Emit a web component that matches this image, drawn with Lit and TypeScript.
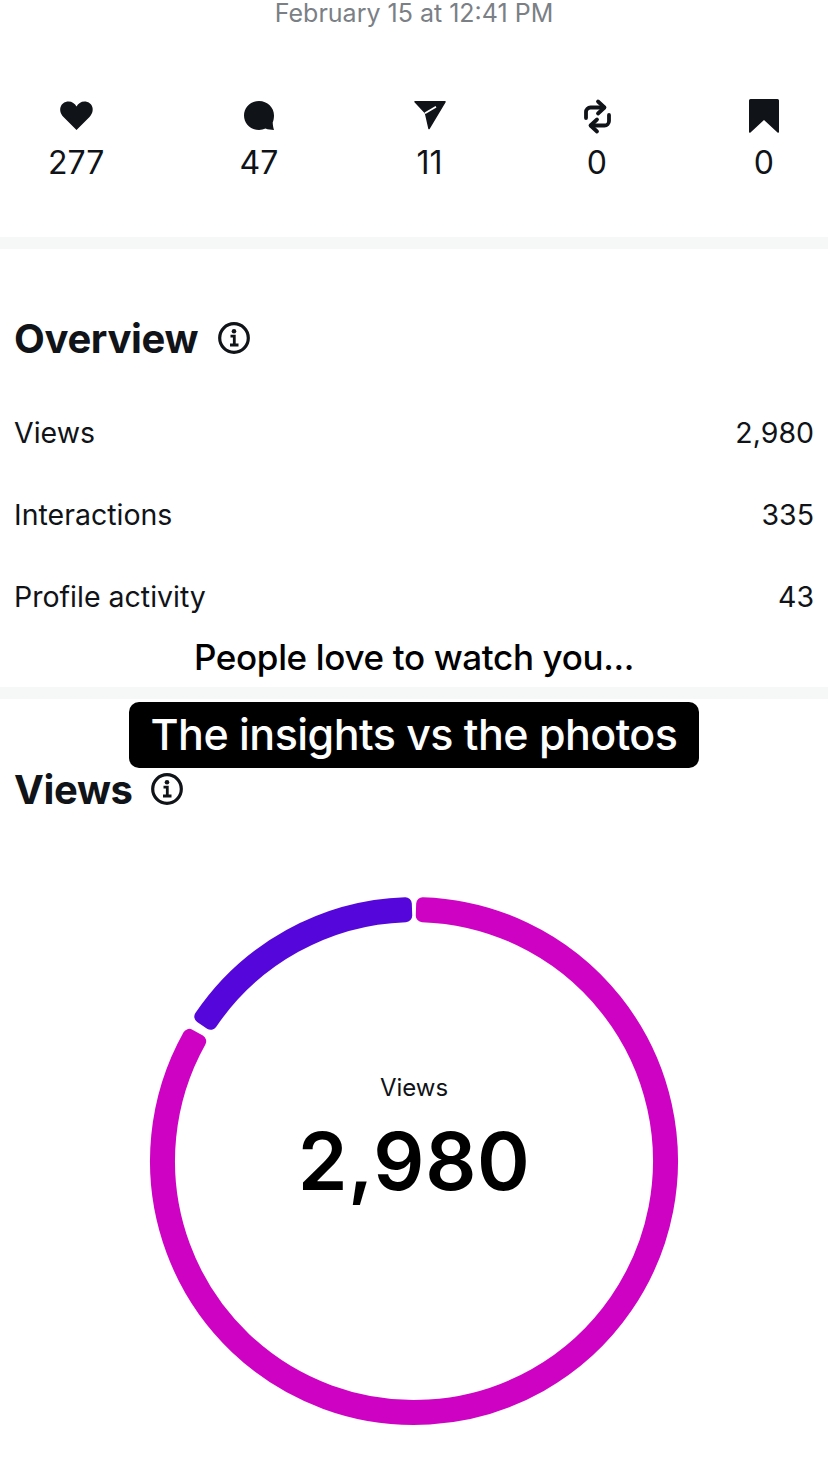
import { LitElement, html, css, svg } from 'lit';
import { customElement } from 'lit/decorators.js';

const CX = 264;
const CY = 264;

// Ring segment as a filled sector; the round-joined stroke gives the soft corners.
function sector(from: number, to: number, inner: number, outer: number) {
  const pt = (r: number, deg: number) => {
    const a = (deg * Math.PI) / 180;
    return `${(CX + r * Math.sin(a)).toFixed(2)} ${(CY - r * Math.cos(a)).toFixed(2)}`;
  };
  const large = to - from > 180 ? 1 : 0;
  return `M${pt(outer, from)} A${outer} ${outer} 0 ${large} 1 ${pt(outer, to)} L${pt(inner, to)} A${inner} ${inner} 0 ${large} 0 ${pt(inner, from)} Z`;
}

const STATS = [
  {
    value: '277',
    icon: svg`<path fill="currentColor" d="M16.5 32 L3.5 19 C-3 12 1 3.500 8.500 3.500 C12 3.500 15 5.500 16.5 8.500 C18 5.500 21 3.500 24.500 3.500 C32 3.500 36 12 29.500 19 Z" />`,
  },
  {
    value: '47',
    icon: svg`<path fill="currentColor" d="M16 3 C7.500 3 1 9.500 1 17.500 C1 25.500 7.500 32 16 32 C18.500 32 20.500 31.500 22.500 30.600 C25 31.600 28 32 31 32 C30.200 29.800 29.900 27.500 29.700 24.500 C30.500 22.500 31 20 31 17.500 C31 9.500 24.500 3 16 3 Z" />`,
  },
  {
    value: '11',
    icon: svg`<path fill="currentColor" stroke="currentColor" stroke-width="1.500" stroke-linejoin="round" d="M1 3.800 H31 L15 30.500 L11.500 15 Z" /><path fill="none" stroke="#fff" stroke-width="1.800" d="M11 15.200 L22 8.800" />`,
  },
  {
    value: '0',
    icon: svg`<g fill="none" stroke="currentColor" stroke-width="3.800" stroke-linecap="round" stroke-linejoin="round"><path d="M5 20 V14 A4.500 4.500 0 0 1 9.500 9.500 H23" /><path d="M17 3.500 L23.500 9.500 L17 15.500" /><path d="M28 17 V23 A4.500 4.500 0 0 1 23.500 27.500 H10" /><path d="M16 21.500 L9.500 27.500 L16 33.500" /></g>`,
  },
  {
    value: '0',
    icon: svg`<path fill="currentColor" d="M1 2.500 Q1 1 2.500 1 H29.500 Q31 1 31 2.500 V33.500 Q31 35.500 29.500 34.500 L16 22 L2.500 34.500 Q1 35.500 1 33.500 Z" />`,
  },
];

const ROWS = [
  { label: 'Views', value: '2,980' },
  { label: 'Interactions', value: '335' },
  { label: 'Profile activity', value: '43' },
];

const infoIcon = html`<svg class="info" viewBox="0 0 32 32" aria-hidden="true">
  <circle cx="16" cy="16" r="14.300" fill="none" stroke="currentColor" stroke-width="3.200" />
  <circle cx="16" cy="9.300" r="2.300" fill="currentColor" />
  <path fill="none" stroke="currentColor" stroke-width="2.800" d="M12.500 14.200 H16.300 V23 M12 23 H20.500" />
</svg>`;

@customElement('app-root')
export class AppRoot extends LitElement {
  static styles = css`
    :host {
      display: block;
      position: relative;
      height: 1472px;
      overflow: hidden;
      background: #fff;
      color: #101317;
      font-family: Inter, 'Noto Sans', sans-serif;
    }

    .date {
      line-height: 26px;
      font-size: 25px;
      text-align: center;
      color: #7b7f86;
    }

    .stats {
      display: flex;
      justify-content: space-between;
      padding: 72px 48px 54px;
    }

    .stat {
      display: flex;
      flex-direction: column;
      align-items: center;
    }

    .stat svg {
      display: block;
      width: 32px;
      height: 36px;
      overflow: visible;
    }

    .stat span {
      margin-top: 9px;
      font-size: 32px;
      line-height: 40px;
    }

    .divider {
      height: 12px;
      background: #f6f8f8;
    }

    .heading {
      display: flex;
      align-items: center;
      height: 48px;
      padding-left: 14px;
      font-size: 40px;
      font-weight: 700;
      letter-spacing: -0.35px;
    }

    .info {
      display: block;
      width: 32px;
      height: 32px;
    }

    .overview .heading {
      gap: 20px;
      margin-top: 65px;
    }

    .rows {
      margin: 29px 0 50px;
    }

    .row {
      display: flex;
      justify-content: space-between;
      align-items: center;
      height: 82px;
      padding: 0 14px;
      font-size: 28.5px;
    }

    .views .heading {
      gap: 18px;
      margin-top: 66px;
    }

    .chart {
      position: relative;
      width: 528px;
      height: 528px;
      margin: 84px auto 0;
    }

    .chart svg {
      display: block;
      width: 528px;
      height: 528px;
      overflow: visible;
    }

    .center {
      position: absolute;
      inset: 0;
      display: flex;
      flex-direction: column;
      align-items: center;
      padding-top: 176px;
      color: #000;
    }

    .center small {
      font-size: 24px;
      line-height: 30px;
      color: #101317;
    }

    .center strong {
      margin-top: 13px;
      font-size: 80px;
      line-height: 90px;
      font-weight: 600;
      letter-spacing: 0.6px;
    }

    .caption {
      position: absolute;
      top: 635px;
      left: 0;
      right: 0;
      text-align: center;
      font-size: 35px;
      line-height: 44px;
      font-weight: 550;
      letter-spacing: -0.35px;
      color: #000;
    }

    .pill {
      position: absolute;
      top: 702px;
      left: 129px;
      width: 570px;
      height: 64px;
      padding-bottom: 2px;
      display: flex;
      align-items: center;
      justify-content: center;
      border-radius: 10px;
      background: #000;
      color: #fff;
      font-size: 43px;
      font-weight: 550;
      letter-spacing: -0.55px;
    }
  `;

  render() {
    return html`
      <div class="date">February 15 at 12:41 PM</div>

      <div class="stats">
        ${STATS.map(
          (s) => html`<div class="stat">
            <svg viewBox="0 0 32 36" aria-hidden="true">${s.icon}</svg>
            <span>${s.value}</span>
          </div>`
        )}
      </div>

      <div class="divider"></div>

      <section class="overview">
        <div class="heading">Overview ${infoIcon}</div>
        <div class="rows">
          ${ROWS.map(
            (r) => html`<div class="row"><span>${r.label}</span><span>${r.value}</span></div>`
          )}
        </div>
      </section>

      <div class="divider"></div>

      <section class="views">
        <div class="heading">Views ${infoIcon}</div>
        <div class="chart">
          <svg viewBox="0 0 528 528" aria-hidden="true">
            <path
              fill="#ce02c3"
              stroke="#ce02c3"
              stroke-width="13"
              stroke-linejoin="round"
              d=${sector(1.93, 299.2, 245.5, 257.5)}
            />
            <path
              fill="#5507db"
              stroke="#5507db"
              stroke-width="13"
              stroke-linejoin="round"
              d=${sector(304.1, 358.07, 245.5, 257.5)}
            />
          </svg>
          <div class="center">
            <small>Views</small>
            <strong>2,980</strong>
          </div>
        </div>
      </section>

      <div class="caption">People love to watch you...</div>
      <div class="pill">The insights vs the photos</div>
    `;
  }
}

declare global {
  interface HTMLElementTagNameMap {
    'app-root': AppRoot;
  }
}
